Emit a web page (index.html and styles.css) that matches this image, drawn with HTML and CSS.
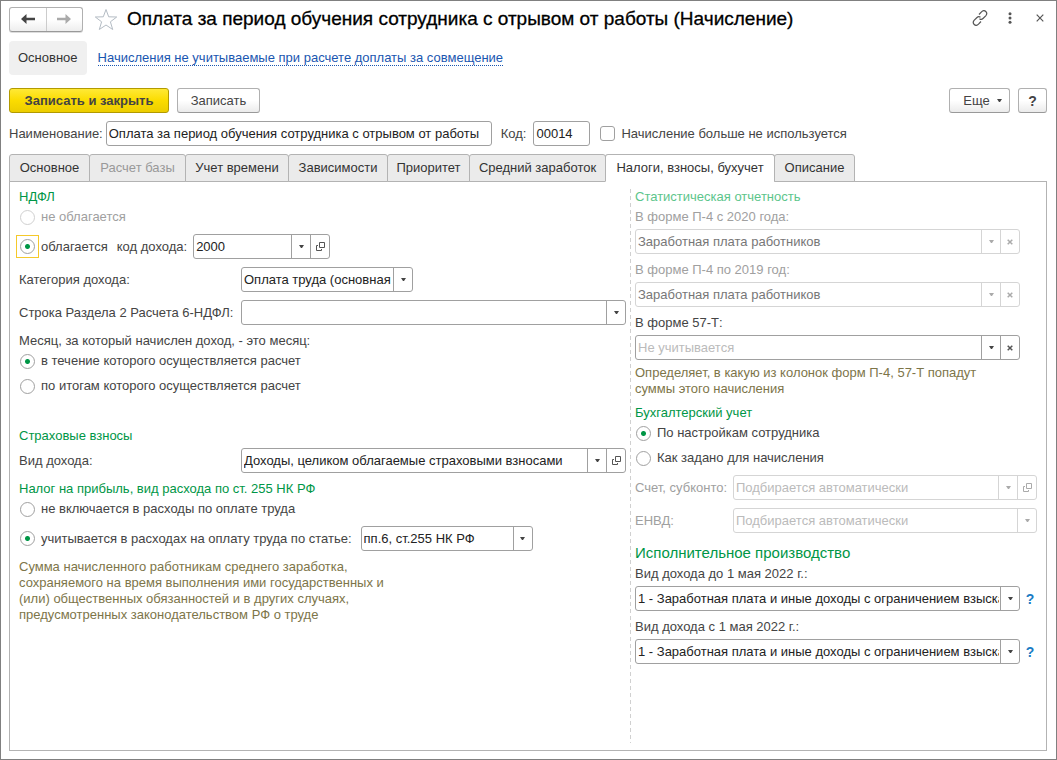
FILE: index.html
```html
<!DOCTYPE html>
<html lang="ru">
<head>
<meta charset="utf-8">
<title>Оплата за период обучения сотрудника с отрывом от работы (Начисление)</title>
<link rel="stylesheet" href="styles.css">
</head>
<body>
<svg class="defs" aria-hidden="true">
  <symbol id="arrow" viewBox="0 0 5 3"><path d="M0 0h5L3 3H2z" fill="currentColor"/></symbol>
  <symbol id="open" viewBox="0 0 9 9"><path d="M3.500.5h5v5h-5zM2 3.500H.5v5h5V7" fill="none" stroke="currentColor"/></symbol>
  <symbol id="cross" viewBox="0 0 6 6"><path d="M.7.7l4.600 4.600M5.300.7L.7 5.300" fill="none" stroke="currentColor" stroke-width="1.500"/></symbol>
</svg>
<main class="window">
  <header class="titlebar">
    <div class="history">
      <button type="button" aria-label="Назад"><svg width="14" height="10" viewBox="0 0 14 10"><path d="M0 5l5.500-5v3.700H14v2.600H5.500V10z" fill="#444"/></svg></button>
      <button type="button" aria-label="Вперед"><svg width="14" height="10" viewBox="0 0 14 10"><path d="M14 5L8.500 0v3.700H0v2.600h8.500V10z" fill="#aaa"/></svg></button>
    </div>
    <button type="button" class="icon-button" aria-label="Избранное"><svg width="24" height="23" viewBox="0 0 24 23"><path d="M12 1.500l2.700 7.300 8 .2-6.300 4.800 2.300 7.700L12 17l-6.700 4.500 2.300-7.700L1.300 9l8-.2z" fill="#fff" stroke="#b4bcc4"/></svg></button>
    <h1>Оплата за период обучения сотрудника с отрывом от работы (Начисление)</h1>
    <div class="window-tools">
      <button type="button" class="icon-button" aria-label="Получить ссылку"><svg width="16" height="16" viewBox="0 0 16 16" fill="none" stroke="#555" stroke-width="1.200"><path d="M7 4.500l2.500-2.700c3-3 7 1 4.200 4L11 8.500c-1 1-2.500 1-3.500.2M9 11.500l-2.500 2.700c-3 3-7-1-4.200-4L5 7.500c1-1 2.500-1 3.500-.2"/></svg></button>
      <button type="button" class="icon-button" aria-label="Действия"><svg width="4" height="12" viewBox="0 0 4 12" fill="#555"><circle cx="2" cy="1.700" r="1.500"/><circle cx="2" cy="6" r="1.500"/><circle cx="2" cy="10.300" r="1.500"/></svg></button>
      <button type="button" class="icon-button close" aria-label="Закрыть"><svg width="8" height="8" viewBox="0 0 8 8"><path d="M.7.7l6.600 6.600M7.300.7L.7 7.300" stroke="#555" stroke-width="1.200"/></svg></button>
    </div>
  </header>

  <nav class="sections">
    <span class="section-current">Основное</span>
    <a href="#">Начисления не учитываемые при расчете доплаты за совмещение</a>
  </nav>

  <div class="commands">
    <button type="button" class="btn btn-primary">Записать и закрыть</button>
    <button type="button" class="btn btn-save">Записать</button>
    <button type="button" class="btn btn-more">Еще <svg width="5" height="3"><use href="#arrow"/></svg></button>
    <button type="button" class="btn btn-help">?</button>
  </div>

  <div class="identity">
    <label for="name">Наименование:</label>
    <input class="text name" id="name" type="text" value="Оплата за период обучения сотрудника с отрывом от работы">
    <label for="code">Код:</label>
    <input class="text code" id="code" type="text" value="00014">
    <label class="check"><input type="checkbox">Начисление больше не используется</label>
  </div>

  <div class="tabs" role="tablist">
    <button type="button" role="tab">Основное</button>
    <button type="button" role="tab" disabled>Расчет базы</button>
    <button type="button" role="tab">Учет времени</button>
    <button type="button" role="tab">Зависимости</button>
    <button type="button" role="tab">Приоритет</button>
    <button type="button" role="tab">Средний заработок</button>
    <button type="button" role="tab" aria-selected="true">Налоги, взносы, бухучет</button>
    <button type="button" role="tab">Описание</button>
  </div>

  <div class="panel" role="tabpanel">
    <section class="column column-left">
      <h2>НДФЛ</h2>
      <label class="radio muted"><input type="radio" name="ndfl" disabled>не облагается</label>
      <div class="row after-radio">
        <label class="radio"><span class="focus-frame"><input type="radio" name="ndfl" checked></span>облагается</label>
        <label class="code-label" for="income-code">код дохода:</label>
        <div class="field field-code">
          <span class="combo"><select id="income-code"><option>2000</option></select><svg width="5" height="3"><use href="#arrow"/></svg></span>
          <button type="button" aria-label="Открыть код дохода"><svg width="9" height="9"><use href="#open"/></svg></button>
        </div>
      </div>
      <div class="row labelled wide-gap">
        <label for="category">Категория дохода:</label>
        <div class="field field-short">
          <span class="combo"><select id="category"><option>Оплата труда (основная налоговая база)</option></select><svg width="5" height="3"><use href="#arrow"/></svg></span>
        </div>
      </div>
      <div class="row labelled wide-gap">
        <label for="line6">Строка Раздела 2 Расчета 6-НДФЛ:</label>
        <div class="field">
          <span class="combo"><select id="line6"><option></option></select><svg width="5" height="3"><use href="#arrow"/></svg></span>
        </div>
      </div>
      <p class="caption wide-gap">Месяц, за который начислен доход, - это месяц:</p>
      <label class="radio"><input type="radio" name="month" checked>в течение которого осуществляется расчет</label>
      <label class="radio after-radio"><input type="radio" name="month">по итогам которого осуществляется расчет</label>

      <h2 class="block-gap">Страховые взносы</h2>
      <div class="row labelled">
        <label for="insurance">Вид дохода:</label>
        <div class="field">
          <span class="combo"><select id="insurance"><option>Доходы, целиком облагаемые страховыми взносами</option></select><svg width="5" height="3"><use href="#arrow"/></svg></span>
          <button type="button" aria-label="Открыть вид дохода"><svg width="9" height="9"><use href="#open"/></svg></button>
        </div>
      </div>

      <h2 class="wide-gap">Налог на прибыль, вид расхода по ст. 255 НК РФ</h2>
      <label class="radio"><input type="radio" name="profit">не включается в расходы по оплате труда</label>
      <div class="row after-radio article-row">
        <label class="radio" for="profit-on"><input id="profit-on" type="radio" name="profit" checked>учитывается в расходах на оплату труда по статье:</label>
        <div class="field field-short">
          <span class="combo"><select aria-label="Статья расходов"><option>пп.6, ст.255 НК РФ</option></select><svg width="5" height="3"><use href="#arrow"/></svg></span>
        </div>
      </div>
      <p class="note note-left wide-gap">Сумма начисленного работникам среднего заработка, сохраняемого на время выполнения ими государственных и (или) общественных обязанностей и в других случаях, предусмотренных законодательством РФ о труде</p>
    </section>

    <section class="column column-right">
      <h2 class="faded">Статистическая отчетность</h2>
      <label class="muted" for="p4new">В форме П-4 с 2020 года:</label>
      <div class="field field-inset disabled">
        <span class="combo"><select id="p4new" disabled><option>Заработная плата работников</option></select><svg width="5" height="3"><use href="#arrow"/></svg></span>
        <button type="button" disabled aria-label="Очистить"><svg width="6" height="6"><use href="#cross"/></svg></button>
      </div>
      <label class="muted wide-gap" for="p4old">В форме П-4 по 2019 год:</label>
      <div class="field field-inset disabled">
        <span class="combo"><select id="p4old" disabled><option>Заработная плата работников</option></select><svg width="5" height="3"><use href="#arrow"/></svg></span>
        <button type="button" disabled aria-label="Очистить"><svg width="6" height="6"><use href="#cross"/></svg></button>
      </div>
      <label class="wide-gap" for="f57">В форме 57-Т:</label>
      <div class="field field-inset">
        <span class="combo"><select class="hint" id="f57"><option>Не учитывается</option></select><svg width="5" height="3"><use href="#arrow"/></svg></span>
        <button type="button" aria-label="Очистить"><svg width="6" height="6"><use href="#cross"/></svg></button>
      </div>
      <p class="note note-right">Определяет, в какую из колонок форм П-4, 57-Т попадут суммы этого начисления</p>

      <h2 class="wide-gap">Бухгалтерский учет</h2>
      <label class="radio"><input type="radio" name="accounting" checked>По настройкам сотрудника</label>
      <label class="radio after-radio"><input type="radio" name="accounting">Как задано для начисления</label>
      <div class="row labelled-narrow after-radio">
        <label class="muted" for="account">Счет, субконто:</label>
        <div class="field disabled">
          <span class="combo"><select class="hint" id="account" disabled><option>Подбирается автоматически</option></select><svg width="5" height="3"><use href="#arrow"/></svg></span>
          <button type="button" disabled aria-label="Открыть счет"><svg width="9" height="9"><use href="#open"/></svg></button>
        </div>
      </div>
      <div class="row labelled-narrow wide-gap">
        <label class="muted" for="envd">ЕНВД:</label>
        <div class="field disabled">
          <span class="combo"><select class="hint" id="envd" disabled><option>Подбирается автоматически</option></select><svg width="5" height="3"><use href="#arrow"/></svg></span>
        </div>
      </div>

      <h2 class="large">Исполнительное производство</h2>
      <label for="before">Вид дохода до 1 мая 2022 г.:</label>
      <div class="row with-help">
        <div class="field">
          <span class="combo"><select id="before"><option>1 - Заработная плата и иные доходы с ограничением взыскания</option></select><svg width="5" height="3"><use href="#arrow"/></svg></span>
        </div>
        <button type="button" class="help">?</button>
      </div>
      <label class="wide-gap" for="after">Вид дохода с 1 мая 2022 г.:</label>
      <div class="row with-help">
        <div class="field">
          <span class="combo"><select id="after"><option>1 - Заработная плата и иные доходы с ограничением взыскания</option></select><svg width="5" height="3"><use href="#arrow"/></svg></span>
        </div>
        <button type="button" class="help">?</button>
      </div>
    </section>
  </div>
</main>
</body>
</html>
```
FILE: styles.css
```css
* { box-sizing: border-box; }

body {
  margin: 0;
  background: #fff;
  color: #444;
  font: 13px/16px "Liberation Sans", Arial, sans-serif;
}

button, input, select { font: inherit; color: inherit; margin: 0; }
button { padding: 0; }
h1, h2, p { margin: 0; font-weight: normal; }
.defs { display: none; }

.window {
  display: flex;
  flex-direction: column;
  min-height: 100vh;
  padding: 4px 9px 8px 8px;
  border: 1px solid #808080;
}

/* Title bar */
.titlebar { display: flex; align-items: center; height: 28px; }
.history {
  display: flex;
  flex: none;
  width: 74px;
  height: 25px;
  border: 1px solid #b0b0b0;
  border-bottom-color: #999;
  border-radius: 3px;
  background: linear-gradient(#fff 50%, #eee);
  box-shadow: 0 1px 0 #ddd;
}
.history button {
  flex: 1;
  display: grid;
  place-items: center;
  border: 0;
  background: none;
}
.history button + button { border-left: 1px solid #ccc; }
.icon-button { display: grid; place-items: center; border: 0; background: none; }
.titlebar > .icon-button { margin: 0 9px 0 11px; }
h1 { font-size: 19px; line-height: 24px; color: #000; -webkit-text-stroke: 0.3px #000; white-space: nowrap; }
.window-tools { display: flex; align-items: center; gap: 20px; margin-left: auto; padding: 0 3px 3px 0; }
.close { margin-left: 4px; }

/* Section links */
.sections { display: flex; align-items: center; gap: 11px; margin-top: 8px; }
.section-current { padding: 9px; border-radius: 4px; background: #f0f0f0; color: #333; }
.sections a { color: #1a56b0; text-decoration: none; border-bottom: 1px dotted #1a56b0; line-height: 14px; }

/* Command bar */
.commands { display: flex; gap: 8px; margin-top: 13px; }
.btn {
  height: 25px;
  border: 1px solid #b0b0b0;
  border-bottom: 1px solid #999;
  border-radius: 3px;
  background: linear-gradient(#fff 50%, #ebebeb);
}
.btn-primary {
  width: 160px;
  border-color: #b29a00;
  background: linear-gradient(#ffe936, #fbdc00 50%, #eccd00);
  font-weight: bold;
}
.btn-save { width: 83px; }
.btn-more {
  display: flex;
  align-items: center;
  justify-content: center;
  gap: 7px;
  width: 61px;
  margin-left: auto;
  padding-left: 6px;
}
.btn-help { width: 29px; font-size: 14px; font-weight: bold; }

/* Name and code */
.identity { display: flex; align-items: center; margin-top: 8px; }
.text {
  height: 25px;
  padding: 0 2px;
  border: 1px solid #a0a0a0;
  border-radius: 3px;
  background: #fff;
  color: #222;
}
.name { width: 386px; margin: 0 9px 0 3px; }
.code { width: 57px; margin: 0 10px 0 7px; }
.check { display: flex; align-items: center; gap: 6px; }
.check input {
  appearance: none;
  width: 15px;
  height: 15px;
  border: 1px solid #a0a0a0;
  border-radius: 3px;
}

/* Tabs */
.tabs {
  position: relative;
  z-index: 1;
  display: grid;
  grid-template-columns: 80px 96px 103px 99px 82px 136px 169px 81px;
  margin-top: 8px;
}
.tabs button {
  height: 28px;
  border: 1px solid #b3b3b3;
  border-radius: 3px 3px 0 0;
  background: #ebebeb;
  color: #333;
  white-space: nowrap;
}
.tabs button:not(:last-child) { margin-right: -1px; }
.tabs button:disabled { color: #999; }
.tabs button[aria-selected="true"] { border-bottom-color: #fff; background: #fff; }

.panel {
  flex: 1;
  display: grid;
  grid-template-columns: minmax(0, 611fr) minmax(0, 407fr);
  margin-top: -1px;
  padding: 7px 9px;
  border: 1px solid #b3b3b3;
}

/* Form columns */
.column { display: flex; flex-direction: column; gap: 4px; }
.column-left { padding-right: 4px; }
.column-right {
  padding-left: 5px;
  background: repeating-linear-gradient(#d0d0d0 0 4px, transparent 4px 7px) 0 0 / 1px 100% no-repeat;
}
h2 { color: #009646; font-size: 13px; line-height: 16px; }
h2.faded { color: #5cc58b; }
h2.large { margin-top: 7px; font-size: 15px; line-height: 18px; }
.muted { color: #a0a0a0; }
.wide-gap { margin-top: 4px; }
.after-radio { margin-top: 5px; }
.block-gap { margin-top: 30px; }
.note { color: #7d7549; }
.note-left { max-width: 380px; }
.note-right { max-width: 360px; margin-top: 1px; }

.row { display: flex; align-items: center; }
.labelled { display: grid; grid-template-columns: 222px minmax(0, 1fr); }
.labelled-narrow { display: grid; grid-template-columns: 98px minmax(0, 1fr); }
.with-help { display: grid; grid-template-columns: minmax(0, 1fr) 17px; }
.code-label { margin: 0 6px 0 9px; }
.article-row { gap: 9px; }

.radio { display: flex; align-items: center; gap: 6px; padding-left: 1px; }
.radio input {
  appearance: none;
  display: block;
  flex: none;
  width: 15px;
  height: 15px;
  border: 1px solid #a0a0a0;
  border-radius: 50%;
  background: #fff;
}
.radio input:disabled { border-color: #d0d0d0; }
.radio input:checked { background: radial-gradient(circle, #009646 2px, #fff 3px); }
.focus-frame { outline: 1px solid #f5c92b; outline-offset: 3px; }

/* Drop-down fields */
.field {
  display: flex;
  height: 25px;
  border: 1px solid #a0a0a0;
  border-radius: 3px;
  background: #fff;
  color: #222;
}
.field-code { width: 137px; }
.field-short { width: 172px; }
.field-inset { margin-right: 17px; }
.combo { flex: 1; display: grid; grid-template-columns: minmax(0, 1fr) 18px; min-width: 0; }
.combo select {
  grid-area: 1 / 1 / 2 / 3;
  appearance: none;
  width: 100%;
  padding: 0 20px 0 2px;
  border: 0;
  background: linear-gradient(#a0a0a0, #a0a0a0) calc(100% - 18px) 0 / 1px 100% no-repeat;
  opacity: 1;
}
.combo svg { grid-area: 1 / 2; place-self: center; pointer-events: none; color: #444; }
.field > button {
  display: grid;
  place-items: center;
  width: 19px;
  border: 0;
  border-left: 1px solid #a0a0a0;
  background: none;
  color: #555;
}
.combo .hint { color: #bbb; }
.field.disabled { border-color: #d5d5d5; color: #777; }
.field.disabled select { background-image: linear-gradient(#d5d5d5, #d5d5d5); }
.field.disabled svg { color: #aaa; }
.field.disabled > button { border-color: #d5d5d5; }

.help { justify-self: end; border: 0; background: none; color: #1a7cc4; font-size: 14px; font-weight: bold; }
.with-help .help { width: 14px; }
```
